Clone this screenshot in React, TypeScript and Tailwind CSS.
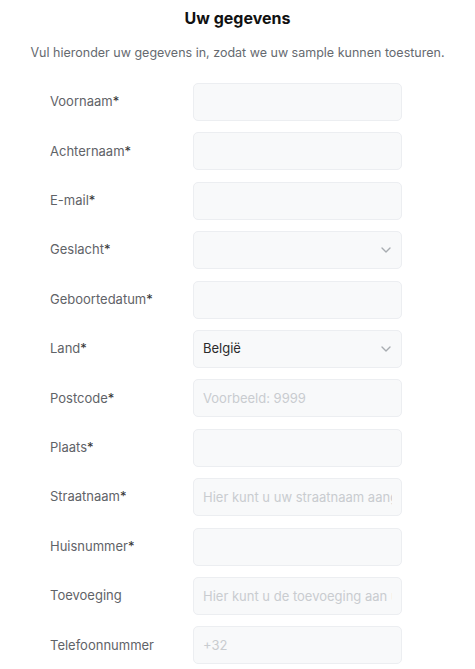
import { ChevronDown } from "lucide-react";

type Field = {
  label: string;
  required?: boolean;
  placeholder?: string;
  value?: string;
  select?: boolean;
};

const fields: Field[] = [
  { label: "Voornaam", required: true },
  { label: "Achternaam", required: true },
  { label: "E-mail", required: true },
  { label: "Geslacht", required: true, select: true },
  { label: "Geboortedatum", required: true },
  { label: "Land", required: true, select: true, value: "België" },
  { label: "Postcode", required: true, placeholder: "Voorbeeld: 9999" },
  { label: "Plaats", required: true },
  { label: "Straatnaam", required: true, placeholder: "Hier kunt u uw straatnaam aangeven" },
  { label: "Huisnummer", required: true },
  { label: "Toevoeging", placeholder: "Hier kunt u de toevoeging aan uw huisnummer aangeven" },
  { label: "Telefoonnummer", placeholder: "+32" },
];

function Row({ f }: { f: Field }) {
  return (
    <div className="flex items-center">
      <label className="w-[143px] shrink-0 text-[13px] text-[#5f6368]">
        {f.label}
        {f.required && <span className="text-[#333]">*</span>}
      </label>
      <div className="relative w-[209px] h-[38px] rounded-[5px] border border-[#eceef1] bg-[#f8f9fa] flex items-center overflow-hidden">
        {f.select ? (
          <>
            <span className="pl-[9px] text-[13px] text-[#2b2b2b]">{f.value ?? ""}</span>
            <ChevronDown className="absolute right-[7px] top-[10px] w-[16px] h-[16px] text-[#a8acb1]" strokeWidth={2} />
          </>
        ) : (
          <input
            className="w-full h-full bg-transparent px-[9px] text-[13px] outline-none placeholder:text-[#c9ccd0]"
            placeholder={f.placeholder}
          />
        )}
      </div>
    </div>
  );
}

export default function App() {
  return (
    <div className="w-[475px] bg-white font-['Inter',sans-serif]">
      <h2 className="pt-[8px] text-center text-[16px] font-bold text-[#111] leading-[20px]">Uw gegevens</h2>
      <p className="mt-[16px] text-center text-[12.5px] text-[#666a70] leading-[18px]">
        Vul hieronder uw gegevens in, zodat we uw sample kunnen toesturen.
      </p>
      <div className="mt-[21px] pl-[50px] flex flex-col gap-[11.4px]">
        {fields.map((f) => (
          <Row key={f.label} f={f} />
        ))}
      </div>
    </div>
  );
}
